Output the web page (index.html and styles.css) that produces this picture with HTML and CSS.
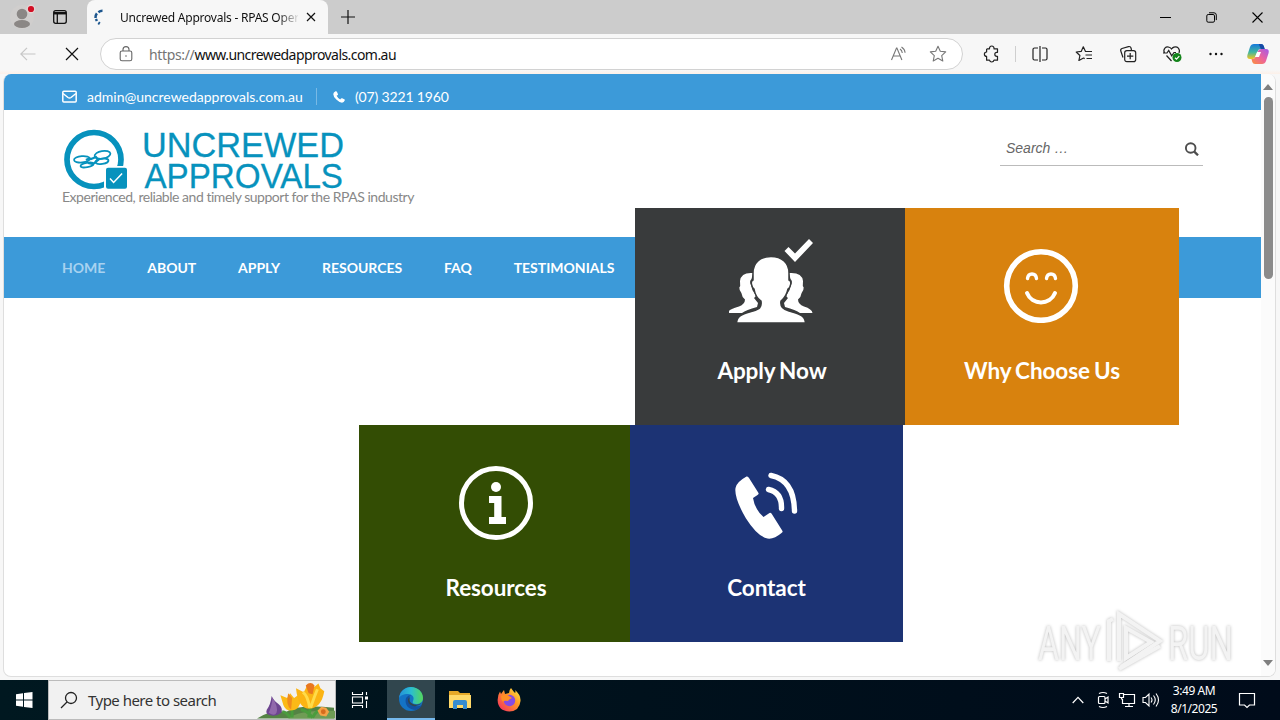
FILE: index.html
```html
<!DOCTYPE html>
<html lang="en">
    <head>
        <meta charset="utf-8">
        <title>Uncrewed Approvals - RPAS Operations</title>
        <link rel="stylesheet" href="styles.css">
    </head>
    <body>
        <div class="titlebar">
            <svg class="profile" width="28" height="28" viewBox="0 0 28 28">
                <circle cx="14" cy="14" r="12" fill="#d0cecd"/>
                <circle cx="14" cy="11" r="5.3" fill="#8b8785"/>
                <ellipse cx="14" cy="21" rx="8" ry="4" fill="#8b8785"/>
                <circle cx="23" cy="6" r="4.4" fill="#e6d5d4"/>
                <circle cx="23" cy="6" r="3.1" fill="#d20f24"/>
            </svg>
            <svg class="workspaces" width="16" height="16" viewBox="0 0 16 16" fill="none" stroke="#111" stroke-width="1.3">
                <rect x="1.7" y="1.7" width="12.6" height="12.6" rx="2"/>
                <path d="M2 4.2h12" stroke-width="2.5"/>
                <path d="M5.3 4v10"/>
            </svg>
            <div class="tab">
                <svg class="spinner" width="16" height="16" viewBox="0 0 16 16" fill="none" stroke="#1c568e" stroke-width="2.5">
                    <path d="M10.5 1.8A6.3 6.3 0 0 0 6.400 3.2M4.900 4.400A6.3 6.3 0 0 0 3.500 9M3.900 10l1 2"/>
                    <path d="M6.3 13.800l1.500.9" stroke-width="2.8"/>
                </svg>
                <span class="tab-title">Uncrewed Approvals - RPAS Oper</span>
                <svg width="10" height="10" viewBox="0 0 10 10" stroke="#111" stroke-width="1.2"><path d="M1 1l8 8M9 1L1 9"/></svg>
            </div>
            <svg class="new-tab" width="14" height="14" viewBox="0 0 14 14" stroke="#111" stroke-width="1.2"><path d="M7 0v14M0 7h14"/></svg>
            <div class="window-buttons">
                <div><svg width="11" height="11" viewBox="0 0 11 11" stroke="#000"><path d="M0 5.5h11"/></svg></div>
                <div><svg width="11" height="11" viewBox="0 0 11 11" fill="none" stroke="#000"><rect x=".8" y="2.5" width="7.7" height="7.7" rx="1.4"/><path d="M3 .8h5a2.3 2.3 0 0 1 2.3 2.3v5"/></svg></div>
                <div><svg width="11" height="11" viewBox="0 0 11 11" stroke="#000" stroke-width="1.1"><path d="M.5.5l10 10M10.5.5l-10 10"/></svg></div>
            </div>
        </div>

        <div class="toolbar">
            <svg class="back" width="16" height="14" viewBox="0 0 16 14" fill="none" stroke="#c6c6c6" stroke-width="1.2"><path d="M15.5 7H1M7 .8L.8 7 7 13.2"/></svg>
            <svg class="stop" width="14" height="14" viewBox="0 0 14 14" stroke="#111" stroke-width="1.2"><path d="M1 1l12 12M13 1L1 13"/></svg>
            <div class="address">
                <svg width="14" height="16" viewBox="0 0 14 16" fill="none" stroke="#666" stroke-width="1.1">
                    <rect x="1.2" y="5" width="11.6" height="9.8" rx="1.8"/><path d="M4 5V3.6a3 3 0 0 1 6 0V5"/><circle cx="7" cy="10" r=".8" fill="#666" stroke="none"/>
                </svg>
                <span class="url"><span class="scheme">https://</span>www.uncrewedapprovals.com.au</span>
                <svg class="read" width="18" height="16" viewBox="0 0 18 16" fill="none" stroke="#777" stroke-width="1.1">
                    <path d="M1.5 14L6.5 2h.4l5 12M3.2 10h7M10 3q2 1.3 2.3 4M11.5 1q3.2 2 3.6 5.8"/>
                </svg>
                <svg class="star" width="18" height="18" viewBox="0 0 18 18" fill="none" stroke="#777" stroke-width="1.1" stroke-linejoin="round">
                    <path d="M9 1.3l2.3 5 5.4.6-4 3.7 1.1 5.4L9 13.3l-4.8 2.7 1.1-5.4-4-3.7 5.4-.6z"/>
                </svg>
            </div>
            <div class="tools">
                <svg class="extensions" width="18" height="18" viewBox="0 0 18 18" fill="none" stroke="#222" stroke-width="1.2" stroke-linejoin="round">
                    <path d="M4.2 3.8h2.3a2.3 2.3 0 1 1 4.500 0h3.500v3.500h-.7a2 2 0 1 0 0 4h.7v3.900h-3.500a2.300 2.300 0 0 1-4.500 0H3.600v-3.800a2.200 2.200 0 1 1 0-4.400V4.500z"/>
                </svg>
                <span class="divider"></span>
                <div><svg width="18" height="18" viewBox="0 0 18 18" fill="none" stroke="#222" stroke-width="1.2"><path d="M7 3H3.500A1.500 1.500 0 0 0 2 4.500v9A1.500 1.500 0 0 0 3.500 15H7M11 3h3.500A1.500 1.500 0 0 1 16 4.500v9a1.500 1.500 0 0 1-1.500 1.500H11M9 1v16"/></svg></div>
                <div><svg width="18" height="18" viewBox="0 0 18 18" fill="none" stroke="#222" stroke-width="1.2" stroke-linejoin="round"><path d="M11.500 6.500h-1L8.300 1.800 6.200 6.400l-5 .6 3.700 3.500-1 5 4.600-2.500 1.200.6M11.500 6.500H17M10.500 10H17M11.500 13.500H17"/></svg></div>
                <div><svg width="18" height="18" viewBox="0 0 18 18" fill="none" stroke="#222" stroke-width="1.2"><path d="M4 12.500L1.800 6A2 2 0 0 1 3 3.500L9.500 1.600A2 2 0 0 1 12 3l.5 2"/><rect x="5.7" y="5.6" width="11" height="11" rx="2.2"/><path d="M11.200 8v6.300M8 11.100h6.300"/></svg></div>
                <div><svg width="20" height="18" viewBox="0 0 20 18" fill="none" stroke="#222" stroke-width="1.2"><path d="M2.500 8C.5 4 4 .8 7.200 2.200Q8.600 2.700 9.500 4q1-1.400 2.400-1.900C15.500 1 18.500 4 17 8M1 8h4l1.700-2.500 3 5.300L12 7.500h2M4.500 10.500L9.500 16"/><circle cx="15" cy="12.5" r="4.5" fill="#13841b" stroke="none"/><path d="M13 12.700l1.500 1.400 2.800-3" stroke="#fff"/></svg></div>
                <div><svg width="16" height="16" viewBox="0 0 16 16" fill="#111"><circle cx="2.5" cy="8" r="1.2"/><circle cx="8" cy="8" r="1.2"/><circle cx="13.5" cy="8" r="1.2"/></svg></div>
                <svg class="copilot" width="24" height="22" viewBox="0 0 24 22">
                    <defs>
                        <linearGradient id="cpLeft" x1="0" y1="0" x2="0" y2="1"><stop offset="0" stop-color="#1679dc"/><stop offset=".55" stop-color="#42b7a0"/><stop offset="1" stop-color="#f5c51e"/></linearGradient>
                        <linearGradient id="cpRight" x1="1" y1="0" x2="0" y2="1"><stop offset="0" stop-color="#a25bea"/><stop offset=".5" stop-color="#ed639c"/><stop offset="1" stop-color="#fb913b"/></linearGradient>
                    </defs>
                    <path d="M8 1h7q2 0 2.700 2l.8 3h-4q-2 0-2.700 2L9.300 14q-.8 2-3 2H4q-3.500 0-2.600-4L4 4q1-3 4-3z" fill="url(#cpLeft)"/>
                    <path d="M15 1q2.200 0 2.800 2l1 3h-4l-2-5z" fill="#164aa5"/>
                    <path d="M16 21H9q-2 0-2.700-2l-.8-3q3 .2 4-2l2.600-6q.8-2 3-2H20q3.500 0 2.600 4L20 18q-1 3-4 3z" fill="url(#cpRight)"/>
                    <path d="M11 9h4l-2 5H9z" fill="#fff"/>
                </svg>
            </div>
        </div>

        <div class="viewport">
            <div class="page">
                <div class="topbar">
                    <svg width="15" height="13" viewBox="0 0 15 13" fill="none" stroke="#fff" stroke-width="1.5"><rect x=".8" y="1.3" width="13.4" height="10.7" rx="1"/><path d="M1 3.500l5 4q1.500 1 3 0l5-4"/></svg>
                    <span class="email">admin@uncrewedapprovals.com.au</span>
                    <svg class="tel-icon" width="12" height="12" viewBox="0 0 12 12" fill="#fff"><path d="M2.500.3Q3.600-.2 4 1l.9 2q.3.800-.5 1.200l-.8.6Q4.800 7.300 7.200 8.400l.8-.9q.5-.6 1.200-.2l2 1q.9.400.5 1.300Q11 11.700 9 11.700 6.300 11.600 3.300 8.600.2 5.500.3 3 .4 1.200 2.500.3z"/></svg>
                    <span class="tel">(07) 3221 1960</span>
                </div>
                <div class="header">
                    <div class="branding">
                        <svg class="logo" width="284" height="62" viewBox="0 0 284 62">
                            <circle cx="32" cy="31.5" r="27" fill="none" stroke="#0792bd" stroke-width="5.7"/>
                            <g fill="none" stroke="#0792bd" stroke-width="1.8">
                                <ellipse cx="20" cy="31.3" rx="8" ry="3.2" transform="rotate(-5 20 31.3)"/>
                                <ellipse cx="40.5" cy="26.8" rx="8" ry="3.8" transform="rotate(-10 40.5 26.8)"/>
                                <ellipse cx="25" cy="37" rx="6.5" ry="2.2" transform="rotate(-10 25 37)"/>
                                <ellipse cx="40" cy="33.3" rx="6.5" ry="2.7" transform="rotate(-8 40 33.3)"/>
                                <path d="M24 32q3-2 5-1l5-2 2 3-5 4-5-1" stroke-width="2.2"/>
                            </g>
                            <path d="M42 38h22v23H42z" fill="#fff"/>
                            <rect x="44" y="39.8" width="21" height="21" rx="2" fill="#0792bd"/>
                            <path d="M48 50.500l3.600 4 8.500-9" fill="none" stroke="#fff" stroke-width="1.5"/>
                            <g class="logo-text">
                                <text x="80" y="28.7" textLength="202" lengthAdjust="spacingAndGlyphs">UNCREWED</text>
                                <text x="82.5" y="59.5" textLength="198.5" lengthAdjust="spacingAndGlyphs">APPROVALS</text>
                            </g>
                        </svg>
                        <div class="tagline">Experienced, reliable and timely support for the RPAS industry</div>
                    </div>
                    <div class="search">
                        <span>Search …</span>
                        <svg width="15" height="15" viewBox="0 0 15 15" fill="none" stroke="#4d4d4d" stroke-width="1.9"><circle cx="6.7" cy="7" r="4.8"/><path d="M10.300 10.600l3.700 3.700" stroke-width="2.3"/></svg>
                    </div>
                </div>
                <nav class="menu">
                    <a class="current">HOME</a>
                    <a>ABOUT</a>
                    <a>APPLY</a>
                    <a>RESOURCES</a>
                    <a>FAQ</a>
                    <a>TESTIMONIALS</a>
                </nav>
                <div class="tiles">
                    <div class="tile-row tile-row-top">
                        <div class="tile tile-apply">
                            <svg width="90" height="90" viewBox="0 0 90 90" fill="#fff">
                                <path d="M57.500 18l4-4 6.500 6.500L82 6l4 4L68 29z"/>
                                <path d="M26 40q-12-1-13 8l.2 5q-1.500 1-.5 4l1.700 3q.5 4 3.600 6.500Q18 71 12 73.500 3 76 2 78v2h13q4-3 15-6l1-4-4-5q2-1 1.500-3-4-5-4.500-10-2-4 .5-6z"/>
                                <path d="M62 40q13-1 14 8l-.2 5q1.500 1 .5 4l-1.700 3q-.5 4-3.600 6.500 0 4.500 6 7 8 2.500 8.500 6.500H73q-4-3-15-6l-1-4 4-5q-2-1-1.500-3 4-5 4.500-10 2-4-.5-6z"/>
                                <path d="M44 23.500C33 23.500 26 30 26 40v7c-3 1-1.500 7 1 9 1 6 4 10 7 12 1 7-2 8-8 10-10 3-16 4-16.500 12h69C78 82 72 81 62 78c-6-2-9-4-8-10 4-3 6-7 7-12 3-2 4-8 1-9v-7c0-10-7-16.500-18-16.500z" stroke="#393b3c" stroke-width="1.5"/>
                            </svg>
                            <h3>Apply Now</h3>
                        </div>
                        <div class="tile tile-why">
                            <svg width="90" height="90" viewBox="0 0 90 90" fill="none" stroke="#fff" stroke-linecap="round">
                                <circle cx="44" cy="53" r="34.3" stroke-width="5.6"/>
                                <path d="M30.500 45.500q.5-4.500 4.500-4.500t4.500 4.500M49.500 45.500q.5-4.500 4.500-4.500t4.500 4.500" stroke-width="3.4"/>
                                <path d="M30 60C35 72.500 53 72.500 58 60" stroke-width="4"/>
                            </svg>
                            <h3>Why Choose Us</h3>
                        </div>
                    </div>
                    <div class="tile-row">
                        <div class="tile tile-resources">
                            <svg width="90" height="90" viewBox="0 0 90 90" fill="#fff">
                                <circle cx="45" cy="53" r="34.5" fill="none" stroke="#fff" stroke-width="5"/>
                                <circle cx="45" cy="37" r="5"/>
                                <path d="M38 46h12.500v21H55v7H38v-7h5.200V53H38z"/>
                            </svg>
                            <h3>Resources</h3>
                        </div>
                        <div class="tile tile-contact">
                            <svg width="90" height="90" viewBox="0 0 90 90" fill="#fff">
                                <path d="M24.500 26.500Q26 26 27 28l9.500 15q.5 1-1 2l-4.500 3q1.500 11 10.500 19l6-4q1-.5 2 .5l11 17.500q.5 1-1 2-7.500 6.500-14 5.500-10-2-21.500-20Q12 48 13.500 38q1-6 11-11.500z"/>
                                <path d="M49 25.500Q72 30 72.500 61M46.500 39.500Q60 42.500 59.500 58.500" fill="none" stroke="#fff" stroke-width="5.4" stroke-linecap="round"/>
                            </svg>
                            <h3>Contact</h3>
                        </div>
                    </div>
                </div>
                <svg class="watermark" width="200" height="66" viewBox="0 0 200 66">
                    <g class="watermark-text">
                        <text x="3" y="51" textLength="63" lengthAdjust="spacingAndGlyphs">ANY</text>
                        <text x="133" y="51" textLength="65" lengthAdjust="spacingAndGlyphs">RUN</text>
                    </g>
                    <g class="watermark-mark">
                        <path d="M74 52V12l4-2M84 52V5l41 27-39 26"/>
                        <path d="M91 49V19l25 14z"/>
                        <path d="M84 60l41-23"/>
                    </g>
                </svg>
            </div>
            <div class="scrollbar">
                <svg width="10" height="6" viewBox="0 0 10 6" fill="#7f7f7f"><path d="M0 6l5-6 5 6z"/></svg>
                <div class="thumb"></div>
                <svg class="arrow-down" width="10" height="6" viewBox="0 0 10 6" fill="#7f7f7f"><path d="M0 0h10L5 6z"/></svg>
            </div>
        </div>

        <div class="taskbar">
            <div class="start"><svg width="17" height="16" viewBox="0 0 17 16" fill="#fff"><path d="M0 2.300L7 1.300v6.300H0zM8 1.100L16.500 0v7.600H8zM0 8.500h7v6.300l-7-1zM8 8.500h8.500V16L8 15z"/></svg></div>
            <div class="taskbar-search">
                <svg width="18" height="18" viewBox="0 0 18 18" fill="none" stroke="#222" stroke-width="1.3"><circle cx="11" cy="7" r="5.5"/><path d="M7 11l-6 6"/></svg>
                <span>Type here to search</span>
                <svg class="flowers" width="78" height="38" viewBox="0 0 80 38">
                    <path d="M0 38q14-9 30-7 13-8 49-4v11z" fill="#548344"/>
                    <path d="M32 38q10-9 48-8v8z" fill="#6f9c55"/>
                    <path d="M36 37V26M53 37l2-12M57 37q-7-8-12-8M57 37q4-8 10-8M34 37q-4-6-8-6" stroke="#4a9c3d" stroke-width="3" fill="none"/>
                    <path d="M15 15q3 6 7 8 5 4 3 9-5 4-10 3-7-1-5-6 4-5 5-14z" fill="#6d4590"/>
                    <path d="M16 17q-1 9-4 15 6 4 8 0 2-6-4-15z" fill="#9169ab"/>
                    <path d="M24 14l7 3 3-5 4 5 7-5q1 14-6 17-9 3-12-5z" fill="#fbb916"/>
                    <path d="M32 12l4 5-1 12q-6-5-3-17z" fill="#f08c1c"/>
                    <path d="M40 7l8 4 4-8 4 5 7-6 2 5 4 3q-3 17-15 18-12 0-14-21z" fill="#fbb413"/>
                    <path d="M50 4q5-5 9 0l-2 9-4-1z" fill="#e9771f"/>
                    <path d="M47 11q5 3 7 16M62 8q-3 7-7 19" stroke="#ffdb49" stroke-width="3" fill="none"/>
                    <path d="M66 26l5 1 3 4-3 5-6-1-3-5z" fill="#f6a247"/><circle cx="68" cy="31" r="2.5" fill="#d76c1d"/>
                </svg>
            </div>
            <div class="app app-taskview"><svg width="18" height="18" viewBox="0 0 18 18" fill="none" stroke="#fff" stroke-width="1.1"><path d="M1.500 1v2.500h10V1M1.500 17v-2.500h10V17M1.500 6h10v6h-10zM15.500 1v3M15.500 10v7"/><path d="M14 5.500h3v3h-3z" fill="#fff" stroke="none"/></svg></div>
            <div class="app app-active">
                <svg width="26" height="26" viewBox="0 0 26 26">
                    <defs><linearGradient id="edgeTop" x1="0" x2="1"><stop offset="0" stop-color="#2490d9"/><stop offset=".5" stop-color="#2bbdd1"/><stop offset="1" stop-color="#55d75a"/></linearGradient></defs>
                    <circle cx="13" cy="13" r="12" fill="#1473c5"/>
                    <path d="M1 12C2 5 7 1 13 1c7 0 12 5 12 11 0 4-3 6-7 6-3 0-4-1-3-3 2-4-1-7-5-7-5 0-8 2-9 4z" fill="url(#edgeTop)"/>
                    <path d="M8 12c-2 7 3 12 10 12 3-1 5-3 6-5-6 3-13 0-13-6q0-3 2-4-3 0-5 3z" fill="#1251a0"/>
                    <path d="M12 11q-2 5 3 7 4 2 9-1-4 4-9 3-6-2-5-7z" fill="#31464e"/>
                </svg>
            </div>
            <div class="app"><svg width="22" height="20" viewBox="0 0 22 20"><path d="M0 1h9l2 2h10v4H0z" fill="#e6a929"/><path d="M0 5h22v13H0z" fill="#ffd969"/><path d="M4 19v-7q0-2 2-2h10q2 0 2 2v7h-4v-4H8v4z" fill="#368cd0"/></svg></div>
            <div class="app app-firefox">
                <svg width="24" height="24" viewBox="0 0 24 24">
                    <defs><linearGradient id="fox" x1="1" y1="0" x2="0" y2="1"><stop offset="0" stop-color="#fff44a"/><stop offset=".4" stop-color="#ff9a25"/><stop offset="1" stop-color="#f52366"/></linearGradient></defs>
                    <path d="M14 0q2 3 4 5 1-1 0-3 6 5 5.500 11-1 10-11 10.500Q1 23 .6 12 .6 7 3 3.500L4 6l3-4 1 4 4-1q0-3 2-5z" fill="url(#fox)"/>
                    <circle cx="12.5" cy="12.5" r="5.7" fill="#854be4"/><path d="M4 8q5-3 8 0l3 2q-3 1-4 3-4-1-5 1-2-2-2-6z" fill="#ff8f24"/>
                </svg>
            </div>
            <div class="tray">
                <svg width="12" height="8" viewBox="0 0 12 8" fill="none" stroke="#fff" stroke-width="1.2"><path d="M.7 7L6 1.300 11.300 7"/></svg>
                <svg width="14" height="18" viewBox="0 0 14 18" fill="none" stroke="#fff" stroke-width="1.2"><rect x="2.5" y="5.5" width="6.5" height="7" rx="1"/><path d="M9 8l3-2v6L9 10M3 2.500q4-2 8 0M3 15.500q4 2 8 0"/></svg>
                <svg width="18" height="16" viewBox="0 0 18 16" fill="none" stroke="#fff" stroke-width="1.2"><path d="M6 2.500h10.500v9H4.500V7M11 11.500v3M7 14.500h8M1.500 1.500h4v4h-4zM3.500 5.500V7h1"/></svg>
                <svg width="18" height="16" viewBox="0 0 18 16" fill="none" stroke="#fff" stroke-width="1.1"><path d="M1 5.500h2.500L7 2v12l-3.500-3.500H1zM9 5.500q2 2.500 0 5M11.500 3.500q3.500 4.500 0 9M14 1.500q5 6.500 0 13"/></svg>
                <div class="clock"><span>3:49 AM</span><span>8/1/2025</span></div>
                <svg width="18" height="18" viewBox="0 0 18 18" fill="none" stroke="#fff" stroke-width="1.2"><path d="M1.500 2.500h15v11.500h-5L9 16.500 6.500 14h-5z"/></svg>
            </div>
        </div>
    </body>
</html>
```

FILE: styles.css
```css
* {
    box-sizing: border-box;
}
body {
    margin: 0;
    width: 1280px;
    height: 720px;
    overflow: hidden;
    display: flex;
    flex-direction: column;
    background-color: #f7f7f7;
    font-family: Lato, sans-serif;
}
svg {
    display: block;
    flex: none;
}

/* browser window */
.titlebar {
    height: 34px;
    flex: none;
    display: flex;
    align-items: center;
    background-color: #cccccc;
}
.profile {
    margin-left: 8px;
}
.workspaces {
    margin-left: 16px;
}
.tab {
    width: 241px;
    height: 34px;
    margin-left: 19px;
    padding: 0 12px 0 5px;
    display: flex;
    align-items: center;
    background-color: #f7f7f7;
    border-radius: 8px 8px 0 0;
}
.tab-title {
    width: 178px;
    margin-left: 12px;
    margin-right: 8px;
    white-space: nowrap;
    font-family: "Noto Sans", sans-serif;
    font-size: 12px;
    letter-spacing: -0.23px;
    color: #111;
    -webkit-mask-image: linear-gradient(to right, #000 158px, transparent 180px);
    mask-image: linear-gradient(to right, #000 158px, transparent 180px);
}
.new-tab {
    margin-left: 13px;
}
.window-buttons {
    margin-left: auto;
    display: flex;
}
.window-buttons div {
    width: 46px;
    display: flex;
    justify-content: center;
}
.toolbar {
    height: 40px;
    flex: none;
    display: flex;
    align-items: center;
    padding-left: 20px;
    background: linear-gradient(#f7f7f7 90%, #fdf0e8);
}
.stop {
    margin-left: 29px;
}
.address {
    width: 863px;
    height: 32px;
    margin-left: 21px;
    padding: 0 15px 0 18px;
    display: flex;
    align-items: center;
    background-color: #fff;
    border: 1px solid #d2d2d2;
    border-radius: 16px;
}
.url {
    margin-left: 16px;
    font-family: "Noto Sans", sans-serif;
    font-size: 14px;
    letter-spacing: -0.56px;
    color: #111;
}
.scheme {
    letter-spacing: -0.35px;
    color: #757575;
}
.read {
    margin-left: auto;
}
.star {
    margin-left: 21px;
}
.tools {
    flex: 1;
    display: flex;
    align-items: center;
}
.tools div {
    width: 44px;
    display: flex;
    justify-content: center;
}
.extensions {
    margin-left: 20px;
}
.divider {
    width: 1px;
    height: 16px;
    margin-left: 14px;
    margin-right: 2px;
    background-color: #cfcfcf;
}
.copilot {
    margin-left: 8px;
}

/* web page */
.viewport {
    width: 1273px;
    height: 603px;
    flex: none;
    margin-left: 3px;
    display: flex;
    background-color: #fff;
    border: 1px solid #dedede;
    border-top: none;
    border-radius: 8px;
    overflow: hidden;
}
.page {
    width: 1257px;
    position: relative;
}
.topbar {
    height: 36px;
    padding: 9px 0 0 58px;
    display: flex;
    align-items: center;
    background-color: #3c9ad9;
    color: #fff;
    font-size: 14px;
}
.email {
    width: 230px;
    margin-left: 10px;
    border-right: 1px solid #78b9e5;
}
.tel-icon {
    margin-left: 16px;
}
.tel {
    margin-left: 10px;
    letter-spacing: -0.15px;
}
.header {
    height: 127px;
    padding: 18px 58px 0;
    display: flex;
    justify-content: space-between;
}
.logo {
    overflow: visible;
}
.logo-text {
    font-family: "Liberation Sans", sans-serif;
    font-size: 34.5px;
    fill: #0792bd;
    stroke: #0792bd;
    stroke-width: 0.3px;
}
.tagline {
    margin-top: -2px;
    font-size: 14px;
    line-height: 17px;
    letter-spacing: -0.47px;
    color: #888;
    white-space: nowrap;
}
.search {
    width: 203px;
    height: 38px;
    padding: 4px 4px 0 6px;
    display: flex;
    align-items: center;
    justify-content: space-between;
    border-bottom: 1px solid #bbb;
    font-family: "Liberation Sans", sans-serif;
    font-size: 14px;
    font-style: italic;
    color: #666;
}
.search span {
    margin-top: -2px;
}
.menu {
    height: 61px;
    padding-left: 58px;
    display: flex;
    align-items: center;
    gap: 41.8px;
    background-color: #3c9ad9;
    color: #fff;
    font-size: 14px;
    font-weight: 700;
}
.current {
    color: #a7d2f0;
}

/* the tiles hang over the menu */
.tiles {
    position: relative;
    margin-top: -90px;
}
.tile-row {
    display: flex;
    padding-left: 355px;
}
.tile-row-top {
    padding-left: 631px;
}
.tile {
    height: 217px;
    padding-top: 25px;
    display: flex;
    flex-direction: column;
    align-items: center;
    color: #fff;
}
.tile h3 {
    margin: 34px 0 0;
    font-size: 22.5px;
    line-height: 28px;
    font-weight: 700;
    letter-spacing: -0.1px;
    word-spacing: -1.2px;
}
.tile-apply {
    width: 270px;
    padding-left: 4px;
    background-color: #393b3c;
}
.tile-why {
    width: 274px;
    background-color: #d8820e;
}
.tile-resources {
    width: 271px;
    padding-left: 3px;
    background-color: #334d04;
}
.tile-contact {
    width: 273px;
    background-color: #1c3374;
}
.watermark {
    position: absolute;
    right: 26px;
    bottom: 1px;
    overflow: visible;
    filter: drop-shadow(0 0 1.5px #bbb);
}
.watermark-text {
    font-family: Roboto, sans-serif;
    font-size: 49px;
    fill: #f3f3f3;
}
.watermark-mark {
    fill: none;
    stroke: #f3f3f3;
    stroke-width: 4px;
}
.scrollbar {
    width: 14px;
    padding: 10px 0;
    display: flex;
    flex-direction: column;
    align-items: center;
    background-color: #fbfbfb;
}
.thumb {
    width: 9px;
    height: 182px;
    margin-top: 7px;
    border-radius: 5px;
    background-color: #8b8b8b;
}
.arrow-down {
    margin-top: auto;
}

/* windows taskbar */
.taskbar {
    height: 40px;
    margin-top: 3px;
    display: flex;
    background: linear-gradient(to right, #001820, #00111c 50%, #000b1a);
    font-family: "Noto Sans", sans-serif;
}
.start,
.app {
    width: 48px;
    display: flex;
    align-items: center;
    justify-content: center;
}
.app {
    width: 50px;
}
.app-taskview {
    width: 51px;
    padding-right: 3px;
}
.app-firefox {
    width: 48px;
}
.taskbar-search {
    width: 288px;
    padding-left: 11px;
    display: flex;
    align-items: center;
    background-color: #f1f1f1;
    border: 1px solid #bbb;
    color: #333;
    font-size: 15px;
    letter-spacing: -0.52px;
}
.taskbar-search span {
    margin-left: 10px;
    white-space: nowrap;
}
.flowers {
    margin-left: auto;
}
.app-active {
    width: 48px;
    background-color: #31464e;
    border-bottom: 2px solid #76b9ed;
}
.tray {
    margin-left: auto;
    padding-right: 24px;
    display: flex;
    align-items: center;
    color: #fff;
}
.tray svg:nth-child(2) {
    margin-left: 12px;
}
.tray svg:nth-child(3) {
    margin-left: 8px;
}
.tray svg:nth-child(4) {
    margin-left: 6px;
}
.clock {
    width: 68px;
    margin-right: 10px;
    display: flex;
    flex-direction: column;
    align-items: center;
    font-size: 12px;
    line-height: 18px;
    letter-spacing: -0.45px;
}
```
